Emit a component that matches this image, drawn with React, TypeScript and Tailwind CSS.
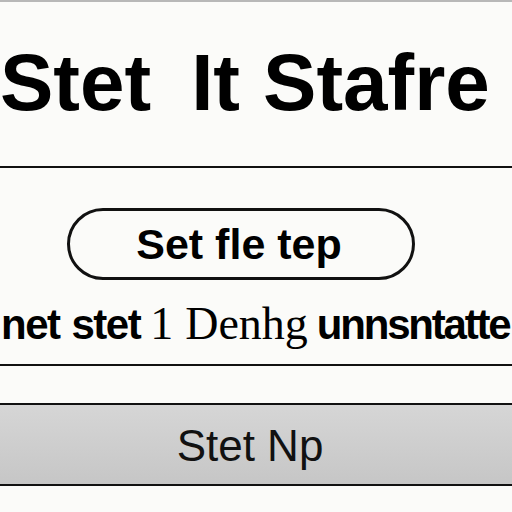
export default function App() {
  return (
    <div className="w-[512px] h-[512px] overflow-hidden bg-[#fbfbf9] flex flex-col" style={{ fontFamily: '"Liberation Sans", Arial, sans-serif' }}>
      <div className="h-[2px] bg-[#b8b8b8]" />
      <div className="h-[164px] flex items-start overflow-hidden">
        <h1 className="mt-[27px] text-[80px] leading-[108px] font-bold text-black whitespace-nowrap">
          Stet<span className="inline-block w-[40px]" />It<span className="inline-block w-[23px]" />Stafre
        </h1>
      </div>
      <div className="h-[2px] bg-[#111]" />
      <div className="h-[40px]" />
      <div className="flex pl-[67px]">
        <button className="w-[348px] h-[72px] rounded-full border-[3px] border-[#111] flex items-center justify-center text-[43px] font-bold text-black pr-[4px]">
          Set fle tep
        </button>
      </div>
      <div className="h-[84px] flex items-center overflow-hidden whitespace-nowrap text-black">
        <div className="flex items-baseline ml-[1px] mt-[2px]">
          <span className="text-[42px] font-bold tracking-[-1.5px]">net</span>
          <span className="inline-block w-[12px]" />
          <span className="text-[42px] font-bold tracking-[-1.5px]">stet</span>
          <span className="inline-block w-[10px]" />
          <span className="text-[46px]" style={{ fontFamily: '"Liberation Serif", "Times New Roman", serif' }}>1</span>
          <span className="inline-block w-[12px]" />
          <span className="text-[46px]" style={{ fontFamily: '"Liberation Serif", "Times New Roman", serif' }}>Denhg</span>
          <span className="inline-block w-[9px]" />
          <span className="text-[42px] font-bold tracking-[-2.2px]">unnsntatte</span>
        </div>
      </div>
      <div className="h-[2px] bg-[#111]" />
      <div className="h-[37px]" />
      <div className="h-[83px] border-y-2 border-[#111] bg-gradient-to-b from-[#d6d6d6] to-[#c6c6c6] flex items-center justify-center">
        <span className="text-[44px] text-[#111] mr-[12px] mt-[2px]">Stet Np</span>
      </div>
    </div>
  );
}
